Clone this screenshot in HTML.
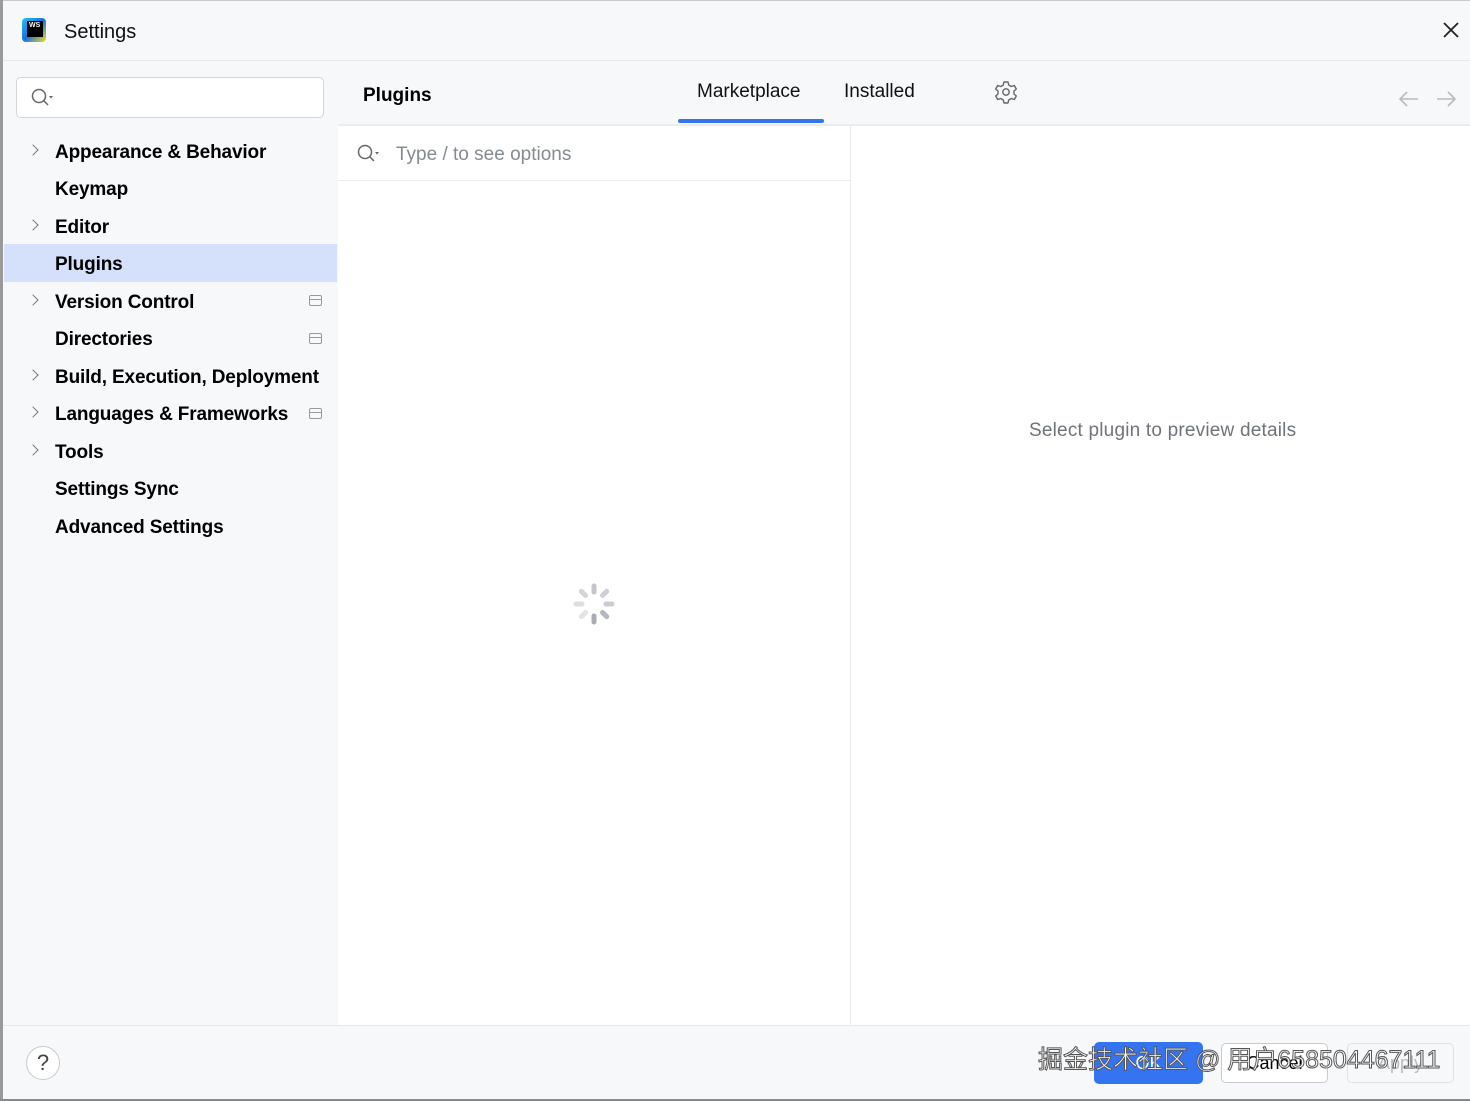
<!DOCTYPE html>
<html><head><meta charset="utf-8"><style>
*{margin:0;padding:0;box-sizing:border-box}
body{width:1470px;height:1101px;overflow:hidden;background:#f7f8fa;font-family:"Liberation Sans","Noto Sans CJK SC",sans-serif;position:relative;color:#000}
.abs{position:absolute}
.item{position:absolute;left:55px;font-size:19px;font-weight:bold;line-height:24px;letter-spacing:-0.15px}
.chev{position:absolute;left:30px;width:8px;height:8px;border-right:1.5px solid #777;border-top:1.5px solid #777;transform:rotate(45deg)}
.mini{position:absolute;left:309px;width:13px;height:11px;border:1.5px solid #999;border-radius:2px}
.mini:after{content:"";position:absolute;left:0;right:0;top:3px;border-top:1.5px solid #999}
</style></head><body>
<div class="abs" style="left:0;top:0;width:3px;height:1101px;background:#9a9a9a"></div>
<div class="abs" style="left:3px;top:0;width:1467px;height:1px;background:#c8c8c8"></div>
<div class="abs" style="left:22px;top:18px;width:24px;height:24px;background:linear-gradient(135deg,#20c4f0,#1a6fe0 50%,#f0e020);border-radius:4px"></div>
<div class="abs" style="left:27px;top:21px;width:16px;height:16px;background:#000;color:#fff;font-size:7px;font-weight:bold;padding:1px 2px">WS</div>
<div class="abs" style="left:64px;top:21px;font-size:20px;color:#111">Settings</div>
<svg class="abs" style="left:1442px;top:21px" width="18" height="18"><path d="M2 2L16 16M16 2L2 16" stroke="#222" stroke-width="1.8"/></svg>
<div class="abs" style="left:3px;top:60px;width:1467px;height:1px;background:#e6e7ea"></div>
<div class="abs" style="left:16px;top:77px;width:308px;height:41px;background:#fff;border:1.5px solid #d3d5da;border-radius:5px"></div>
<svg class="abs" style="left:30px;top:87px" width="26" height="22"><circle cx="9" cy="9" r="6.5" fill="none" stroke="#666" stroke-width="1.5"/><line x1="13.5" y1="13.5" x2="18" y2="18" stroke="#666" stroke-width="1.5"/><path d="M19 9l4 0-2 2.5z" fill="#666"/></svg>
<div class="abs" style="left:4px;top:244px;width:333px;height:38px;background:#d5e1fb"></div>
<div class="chev" style="top:146px;left:29px"></div>
<div class="item" style="top:141px">Appearance &amp; Behavior</div>
<div class="item" style="top:178px">Keymap</div>
<div class="chev" style="top:221px;left:29px"></div>
<div class="item" style="top:216px">Editor</div>
<div class="item" style="top:253px">Plugins</div>
<div class="chev" style="top:296px;left:29px"></div>
<div class="item" style="top:291px">Version Control</div>
<div class="mini" style="top:295px"></div>
<div class="item" style="top:328px">Directories</div>
<div class="mini" style="top:333px"></div>
<div class="chev" style="top:371px;left:29px"></div>
<div class="item" style="top:366px">Build, Execution, Deployment</div>
<div class="chev" style="top:408px;left:29px"></div>
<div class="item" style="top:403px">Languages &amp; Frameworks</div>
<div class="mini" style="top:408px"></div>
<div class="chev" style="top:446px;left:29px"></div>
<div class="item" style="top:441px">Tools</div>
<div class="item" style="top:478px">Settings Sync</div>
<div class="item" style="top:516px">Advanced Settings</div>
<div class="abs" style="left:363px;top:85px;font-size:19px;font-weight:bold">Plugins</div>
<div class="abs" style="left:697px;top:81px;font-size:19px;color:#111">Marketplace</div>
<div class="abs" style="left:844px;top:81px;font-size:19px;color:#111">Installed</div>
<div class="abs" style="left:678px;top:119px;width:146px;height:4px;background:#3574f0;border-radius:2px"></div>
<svg class="abs" style="left:994px;top:80px" width="24" height="24" viewBox="0 0 24 24"><path d="M10 2h4l.7 3 2.6 1.5 3-1 2 3.5-2.3 2v3l2.3 2-2 3.5-3-1-2.6 1.5-.7 3h-4l-.7-3-2.6-1.5-3 1-2-3.5 2.3-2v-3l-2.3-2 2-3.5 3 1L9.3 5z" fill="none" stroke="#666" stroke-width="1.4" stroke-linejoin="round"/><circle cx="12" cy="12" r="3.2" fill="none" stroke="#666" stroke-width="1.4"/></svg>
<svg class="abs" style="left:1398px;top:90px" width="60" height="18"><path d="M20 9H2M9 2L2 9l7 7M39 9h18M50 2l7 7-7 7" fill="none" stroke="#bbb" stroke-width="1.6"/></svg>
<div class="abs" style="left:338px;top:124px;width:1132px;height:2px;background:#ebecf0"></div>
<div class="abs" style="left:338px;top:126px;width:512px;height:899px;background:#fff"></div>
<div class="abs" style="left:850px;top:126px;width:1px;height:899px;background:#ebecf0"></div>
<div class="abs" style="left:851px;top:126px;width:619px;height:899px;background:#fff"></div>
<div class="abs" style="left:338px;top:180px;width:512px;height:1px;background:#ebecf0"></div>
<svg class="abs" style="left:356px;top:143px" width="26" height="22"><circle cx="9" cy="9" r="6.5" fill="none" stroke="#666" stroke-width="1.5"/><line x1="13.5" y1="13.5" x2="18" y2="18" stroke="#666" stroke-width="1.5"/><path d="M19 9l4 0-2 2.5z" fill="#666"/></svg>
<div class="abs" style="left:396px;top:144px;font-size:19px;color:#868a91">Type / to see options</div>
<svg class="abs" style="left:572px;top:582px" width="44" height="44" viewBox="-22 -22 44 44">
<g stroke-linecap="round" stroke-width="5">
<line x1="0" y1="-18" x2="0" y2="-12" stroke="#c3c5ca"/>
<line x1="12.7" y1="-12.7" x2="8.5" y2="-8.5" stroke="#cdd0d4"/>
<line x1="18" y1="0" x2="12" y2="0" stroke="#c9cbd0"/>
<line x1="12.7" y1="12.7" x2="8.5" y2="8.5" stroke="#b4b7bd"/>
<line x1="0" y1="18" x2="0" y2="12" stroke="#a9acb3"/>
<line x1="-12.7" y1="12.7" x2="-8.5" y2="8.5" stroke="#e3e4e7"/>
<line x1="-18" y1="0" x2="-12" y2="0" stroke="#dcdee1"/>
<line x1="-12.7" y1="-12.7" x2="-8.5" y2="-8.5" stroke="#d3d5d9"/>
</g></svg>
<div class="abs" style="left:1029px;top:420px;font-size:19px;color:#6f737a;letter-spacing:0.2px">Select plugin to preview details</div>
<div class="abs" style="left:3px;top:1025px;width:1467px;height:1px;background:#e6e7ea"></div>
<div class="abs" style="left:26px;top:1046px;width:34px;height:34px;border:1.5px solid #c8cacf;border-radius:50%;background:#fff;text-align:center;font-size:22px;line-height:31px;color:#444">?</div>
<div class="abs" style="left:1094px;top:1042px;width:109px;height:42px;background:#3574f0;border-radius:5px;color:#fff;font-size:18px;text-align:center;line-height:42px">OK</div>
<div class="abs" style="left:1221px;top:1043px;width:107px;height:40px;background:#fff;border:1.5px solid #c8cacf;border-radius:5px;font-size:18px;text-align:center;line-height:38px">Cancel</div>
<div class="abs" style="left:1347px;top:1043px;width:107px;height:40px;border:1.5px solid #dfe1e5;border-radius:5px;font-size:18px;text-align:center;line-height:38px;color:#b8bbc0">Apply</div>
<div class="abs" style="left:1038px;top:1040px;font-size:25px;color:#fff;-webkit-text-stroke:1px #555;white-space:nowrap">掘金技术社区 @ 用户658504467111</div>
<div class="abs" style="left:0;top:1099px;width:1470px;height:2px;background:#8a8a8a"></div>
</body></html>
